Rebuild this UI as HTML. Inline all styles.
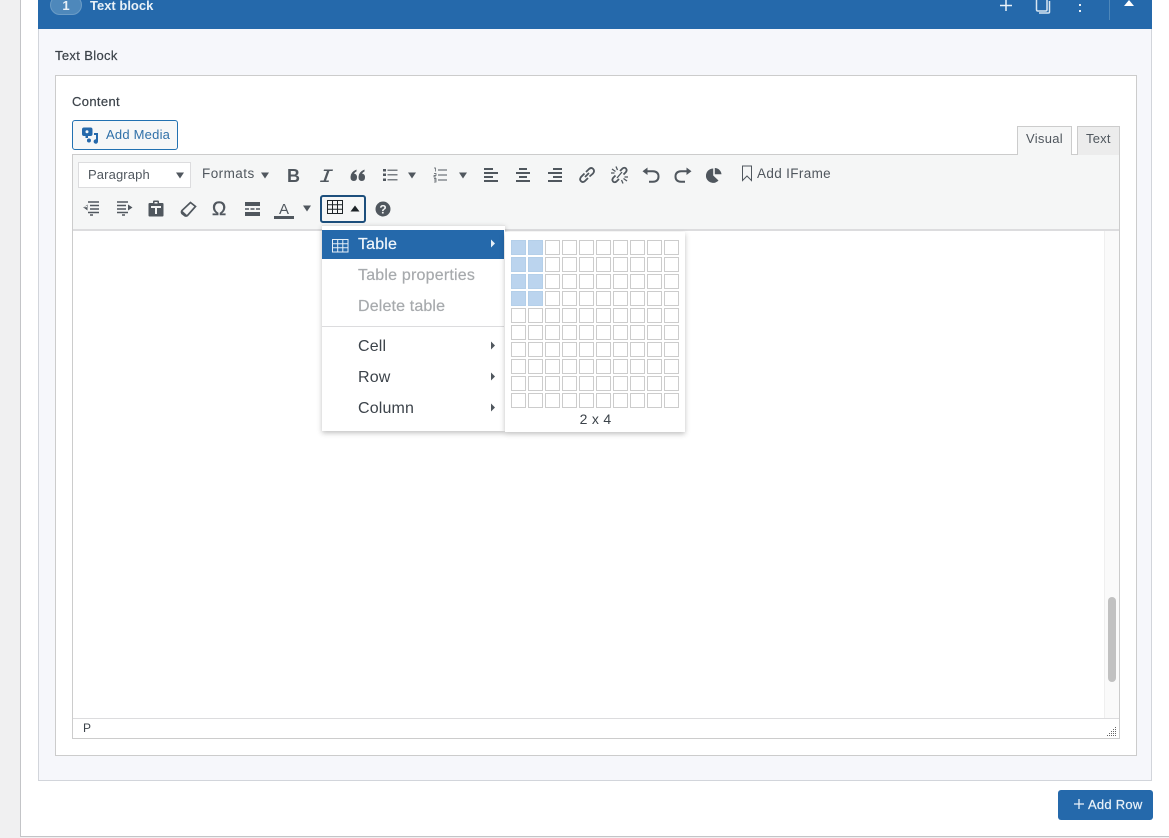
<!DOCTYPE html>
<html><head><meta charset="utf-8"><style>
html,body{margin:0;padding:0}
body{width:1169px;height:838px;overflow:hidden;position:relative;background:#f0f0f1;font-family:"Liberation Sans",sans-serif;color:#3c434a}
div,span,svg{position:absolute;box-sizing:border-box}
.t{white-space:nowrap}
.i{fill:#50575e;stroke:none}
.s{fill:none;stroke:#50575e;stroke-width:2}
</style></head><body>
<div style="left:20px;top:0;width:1149px;height:837px;background:#fff;border-left:1px solid #c3c4c7;border-bottom:1px solid #c3c4c7"></div>
<div style="left:38px;top:0;width:1114px;height:29px;background:#2569ab"></div>
<div style="left:50px;top:-5px;width:32px;height:20px;border-radius:10px;background:#4e88bb;border:1px solid #6b9cc6"></div>
<div class="t" style="left:50px;width:32px;text-align:center;top:-2px;font-size:13px;line-height:16px;font-weight:bold;color:#e8f0f7">1</div>
<div class="t" style="left:90px;top:-2px;font-size:13px;line-height:16px;font-weight:bold;color:#e8f0f7">Text block</div>
<svg style="left:998px;top:0" width="16" height="12"><path d="M8 0V11M2 5.500H14" stroke="#eaf2f9" stroke-width="1.500" fill="none"/></svg>
<svg style="left:1034px;top:0" width="18" height="14"><path d="M2.500 0V9.500Q2.500 11 4 11H11.500Q13 11 13 9.500V0M15.500 1V12Q15.500 13 14 13H5" stroke="#d7e5f1" stroke-width="1.500" fill="none"/></svg>
<div style="left:1079px;top:4px;width:2px;height:2px;background:#eaf2f9"></div>
<div style="left:1079px;top:10px;width:2px;height:2px;background:#eaf2f9"></div>
<div style="left:1109px;top:0;width:1px;height:20px;background:#4d87ba"></div>
<svg style="left:1123px;top:0" width="12" height="7"><path d="M6 0L11 6H1Z" fill="#fff"/></svg>

<div style="left:38px;top:29px;width:1114px;height:752px;background:#f6f7fb;border:1px solid #d2d5db;border-top:0"></div>
<div class="t" style="left:55px;top:48px;font-size:13px;line-height:16px;color:#3c434a;letter-spacing:.35px;-webkit-text-stroke:.2px #3c434a">Text Block</div>
<div style="left:55px;top:75px;width:1082px;height:681px;background:#fff;border:1px solid #ccc"></div>
<div class="t" style="left:72px;top:94px;font-size:13px;line-height:16px;letter-spacing:.35px;-webkit-text-stroke:.2px #3c434a">Content</div>

<div style="left:72px;top:120px;width:106px;height:30px;background:#f6f7f7;border:1px solid #2271b1;border-radius:3px"></div>
<svg style="left:81px;top:127px" width="18" height="17" viewBox="0 0 18 17"><path d="M3 0.500H9.500Q11.500 0.500 11.500 2.500V7Q11.500 9 9.500 9H7V11H4.500V9H3Q1 9 1 7V2.500Q1 0.500 3 0.500ZM6 3.300A1.500 1.500 0 1 0 6 6.300A1.500 1.500 0 1 0 6 3.300Z" fill="#2569ab" fill-rule="evenodd"/><path d="M13 6H17V14.500A2.200 2.200 0 1 1 15 12.300V8H13ZM8 11.500A2 2 0 1 1 7.900 15.500A2 2 0 1 1 8 11.500Z" fill="#2569ab"/></svg>
<div class="t" style="left:106px;top:127px;font-size:13px;line-height:16px;color:#2f70a8;letter-spacing:.22px">Add Media</div>

<div style="left:1017px;top:126px;width:55px;height:30px;background:#f5f6f6;border:1px solid #ccc;border-bottom:0"></div>
<div class="t" style="left:1026px;top:131px;font-size:13px;line-height:16px;color:#50575e;letter-spacing:.3px">Visual</div>
<div style="left:1077px;top:126px;width:43px;height:29px;background:#ececec;border:1px solid #ccc;border-bottom:0"></div>
<div class="t" style="left:1086px;top:131px;font-size:13px;line-height:16px;color:#50575e;letter-spacing:.2px">Text</div>

<div style="left:72px;top:154px;width:945px;height:1px;background:#ccc"></div>
<div style="left:1072px;top:154px;width:5px;height:1px;background:#ccc"></div>
<div style="left:72px;top:155px;width:1048px;height:584px;background:#fff;border:1px solid #ccc;border-top:0"></div>
<div style="left:73px;top:155px;width:1046px;height:74px;background:#f5f6f6"></div>
<div style="left:73px;top:229px;width:1046px;height:2px;background:#dcdcde"></div>

<div style="left:78px;top:162px;width:113px;height:26px;background:#fff;border:1px solid #dcdcde"></div>
<div class="t" style="left:88px;top:167px;font-size:13px;line-height:16px;color:#50575e;letter-spacing:.12px">Paragraph</div>
<svg style="left:175px;top:172px" width="10" height="7"><path d="M1 0.500H9L5 6.500Z" fill="#50575e"/></svg>
<div class="t" style="left:202px;top:166px;font-size:13.500px;line-height:16px;color:#50575e;letter-spacing:.45px">Formats</div>
<svg style="left:260px;top:172px" width="10" height="7"><path d="M1 0.500H9L5 6.500Z" fill="#50575e"/></svg>

<div class="t" style="left:287px;top:166px;font-size:18px;line-height:20px;font-weight:bold;color:#50575e">B</div>
<svg style="left:318px;top:168px" width="16" height="15" viewBox="0 0 16 15"><path d="M6 1.500H15L14.600 3H11.400L8 12.500H11L10.600 14H2L2.400 12.500H5.600L9 3H5.600Z" class="i"/></svg>
<svg style="left:350px;top:169px" width="16" height="13" viewBox="0 0 16 13"><path d="M6.500 0.500V2.500Q4.300 3.500 4.200 4.800Q7 5 7 8.300Q7 12 3.800 12Q0.500 12 0.500 8Q0.500 3 6.500 0.500ZM14.500 0.500V2.500Q12.300 3.500 12.200 4.800Q15 5 15 8.300Q15 12 11.800 12Q8.500 12 8.500 8Q8.500 3 14.500 0.500Z" class="i"/></svg>
<svg style="left:383px;top:168px" width="15" height="14" viewBox="0 0 15 14"><path d="M0 1H3V3.500H0ZM0 5.500H3V8H0ZM0 10.500H3V13H0Z" class="i"/><path d="M4.500 2.200H14.500M4.500 6.800H14.500M4.500 11.800H14.500" style="stroke:#50575e;stroke-width:1.200;fill:none"/></svg>
<svg style="left:407px;top:172px" width="10" height="7"><path d="M1 0.500H9L5 6.500Z" fill="#50575e"/></svg>
<svg style="left:433px;top:167px" width="15" height="16" viewBox="0 0 15 16"><path d="M5 3H14M5 8H14M5 13H14" style="stroke:#50575e;stroke-width:1;fill:none"/><path d="M1 1H2.500V4.500M1 6.500H3V8.500H1V10H3M1 11.500H3V15H1M1 13H3" style="stroke:#50575e;stroke-width:.7;fill:none"/></svg>
<svg style="left:458px;top:172px" width="10" height="7"><path d="M1 0.500H9L5 6.500Z" fill="#50575e"/></svg>
<svg style="left:484px;top:168px" width="15" height="14"><path d="M0 0H9V2H0ZM0 4H14V6H0ZM0 8H9V10H0ZM0 12H14V14H0Z" class="i"/></svg>
<svg style="left:516px;top:168px" width="15" height="14"><path d="M3 0H11V2H3ZM0 4H14V6H0ZM3 8H11V10H3ZM0 12H14V14H0Z" class="i"/></svg>
<svg style="left:548px;top:168px" width="15" height="14"><path d="M5 0H14V2H5ZM0 4H14V6H0ZM5 8H14V10H5ZM0 12H14V14H0Z" class="i"/></svg>
<svg style="left:578px;top:166px" width="18" height="18" viewBox="0 0 18 18"><path d="M7 11L11 7M6.500 7.500L3 11Q1.200 13.500 3 15.200Q5 17 7 15L10 12M8 6L11 3Q13.500 1 15.200 3Q17 5 15 7.500L11.500 10.500" class="s" style="stroke-width:1.800"/></svg>
<svg style="left:610px;top:165px" width="19" height="20" viewBox="0 0 19 20"><path d="M10 6L12.500 3.500Q14.500 2 16 3.500Q17.500 5.500 15.500 7.500L13.500 9.500M9 14L6.500 16.500Q4.500 18 3 16.500Q1.500 14.500 3.500 12.500L5.500 10.500" class="s" style="stroke-width:1.800"/><path d="M6 1.500L7.500 5M2 4L5.500 6.500M1 8H4.500M13 18.500L11.500 15M17 16L13.500 13.500M18 12H14.500M7 13L12 7" style="stroke:#50575e;stroke-width:1.300;fill:none"/></svg>
<svg style="left:642px;top:167px" width="18" height="16" viewBox="0 0 18 16"><path d="M5.500 0.500V8L0.500 4.200Z" class="i"/><path d="M4 4.200H11Q16.500 4.500 16.500 9.500Q16.500 14.500 11 14.800H7" class="s"/></svg>
<svg style="left:674px;top:167px" width="18" height="16" viewBox="0 0 18 16"><path d="M12.500 0.500V8L17.500 4.200Z" class="i"/><path d="M14 4.200H7Q1.500 4.500 1.500 9.500Q1.500 14.500 7 14.800H11" class="s"/></svg>
<svg style="left:706px;top:167px" width="16" height="16" viewBox="0 0 16 16"><path d="M7.200 1.500V8.500L12.500 13.500A7.200 7.200 0 1 1 7.200 1.500ZM8.800 1V7.300H15.500A6.800 6.800 0 0 0 8.800 1Z" class="i"/></svg>
<svg style="left:741px;top:165px" width="12" height="17" viewBox="0 0 12 17"><path d="M1.500 1H10.500V15.500L6 11L1.500 15.500Z" style="fill:none;stroke:#50575e;stroke-width:1"/></svg>
<div class="t" style="left:757px;top:166px;font-size:13.500px;line-height:16px;color:#50575e;letter-spacing:.35px">Add IFrame</div>

<svg style="left:83px;top:201px" width="17" height="16" viewBox="0 0 17 16"><path d="M5 1H16M7 4.500H16M7 8H16M5 11.500H16" style="stroke:#50575e;stroke-width:1.500;fill:none"/><path d="M1 6.200H4V4.500L0 6.800V6.200ZM0.500 6.500L4.500 3.500V9.500Z" class="i"/><path d="M7 14H10" style="stroke:#50575e;stroke-width:1.500;fill:none"/></svg>
<svg style="left:116px;top:201px" width="17" height="16" viewBox="0 0 17 16"><path d="M1 1H12M1 4.500H10M1 8H10M1 11.500H12" style="stroke:#50575e;stroke-width:1.500;fill:none"/><path d="M16.500 6.500L12 3.500V9.500Z" class="i"/><path d="M6 14H9" style="stroke:#50575e;stroke-width:1.500;fill:none"/></svg>
<svg style="left:148px;top:200px" width="16" height="17" viewBox="0 0 16 17"><path d="M1.500 3H5V1.500Q5 0.500 6 0.500H10Q11 0.500 11 1.500V3H14.500Q15.500 3 15.500 4V15.500Q15.500 16.500 14.500 16.500H1.500Q0.500 16.500 0.500 15.500V4Q0.500 3 1.500 3ZM6.500 2V3.500H9.500V2ZM3 6V8H7V14H9V8H13V6Z" class="i" fill-rule="evenodd"/></svg>
<svg style="left:180px;top:201px" width="17" height="17" viewBox="0 0 17 17"><path d="M10.500 1.500L15.500 5.500L7.500 14.500Q6 15.500 4.500 14.500L2 12.500Q1 11 2 9.500Z" style="fill:none;stroke:#50575e;stroke-width:1.700"/><path d="M2 9.500L7.500 14.500Q6 15.500 4.500 14.500L2 12.500Q1 11 2 9.500Z" class="i"/></svg>
<div class="t" style="left:212px;top:200px;font-size:19px;line-height:20px;color:#50575e;-webkit-text-stroke:.4px #50575e">Ω</div>
<svg style="left:245px;top:202px" width="15" height="14"><path d="M0 0H15V4H0ZM0 10H15V14H0ZM0 6.200H4V7.800H0ZM5.500 6.200H9.500V7.800H5.500ZM11 6.200H15V7.800H11Z" class="i"/></svg>
<div class="t" style="left:279px;top:202px;font-size:15px;line-height:16px;color:#50575e">A</div>
<div style="left:274px;top:216px;width:20px;height:2.500px;background:#50575e"></div>
<svg style="left:302px;top:205px" width="10" height="7"><path d="M1 0.500H9L5 6.500Z" fill="#50575e"/></svg>

<div style="left:320px;top:195px;width:46px;height:28px;background:#f5f6f6;border:2px solid #1d4f7c;border-radius:3px"></div>
<svg style="left:327px;top:200px" width="17" height="15" viewBox="0 0 17 15"><path d="M0.500 0.500H15.500V13.500H0.500ZM0.500 4.800H15.500M0.500 9.200H15.500M5.500 0.500V13.500M10.500 0.500V13.500" stroke="#1d2327" stroke-width="1" fill="none"/></svg>
<svg style="left:350px;top:205px" width="10" height="7"><path d="M5 0.500L9.500 6.500H0.500Z" fill="#1d2327"/></svg>
<svg style="left:375px;top:201px" width="16" height="16" viewBox="0 0 16 16"><circle cx="8" cy="8" r="7.500" fill="#50575e"/><text x="8" y="12.300" font-size="12" font-weight="bold" text-anchor="middle" fill="#f5f6f6" font-family="Liberation Sans">?</text></svg>

<div style="left:1104px;top:231px;width:15px;height:487px;background:#fafafa;border-left:1px solid #efefef"></div>
<div style="left:1108px;top:597px;width:8px;height:85px;border-radius:4px;background:#c1c1c1"></div>
<div style="left:73px;top:718px;width:1046px;height:1px;background:#dcdcde"></div>
<div class="t" style="left:83px;top:721px;font-size:12px;line-height:15px;color:#3c434a">P</div>
<svg style="left:1106px;top:726px" width="11" height="11"><path d="M9 1h1v1H9zM7 3h1v1H7zM9 3h1v1H9zM5 5h1v1H5zM7 5h1v1H7zM9 5h1v1H9zM3 7h1v1H3zM5 7h1v1H5zM7 7h1v1H7zM9 7h1v1H9zM1 9h1v1H1zM3 9h1v1H3zM5 9h1v1H5zM7 9h1v1H7zM9 9h1v1H9z" fill="#666"/></svg>

<div style="left:322px;top:225px;width:183px;height:206px;background:#fff;box-shadow:0 2px 5px rgba(0,0,0,.25);border-top:1px solid #e4e4e4"></div>
<div style="left:322px;top:230px;width:182px;height:29px;background:#2569ab"></div>
<svg style="left:332px;top:239px" width="17" height="14" viewBox="0 0 17 14"><path d="M0.500 0.500H16V13H0.500ZM0.500 4.700H16M0.500 8.800H16M5.700 0.500V13M10.800 0.500V13" stroke="#e6f0f8" stroke-width="1" fill="none"/></svg>
<div class="t" style="left:358px;top:236px;font-size:16px;line-height:18px;color:#f0f6fb;letter-spacing:.15px;-webkit-text-stroke:.2px #f0f6fb">Table</div>
<svg style="left:490px;top:239px" width="6" height="9"><path d="M1 0.500L5 4.500L1 8.500Z" fill="#e6f0f8"/></svg>
<div class="t" style="left:358px;top:267px;font-size:16px;line-height:18px;color:#a7aaad;letter-spacing:.2px;-webkit-text-stroke:.2px #a7aaad">Table properties</div>
<div class="t" style="left:358px;top:298px;font-size:16px;line-height:18px;color:#a7aaad;letter-spacing:.15px;-webkit-text-stroke:.2px #a7aaad">Delete table</div>
<div style="left:322px;top:326px;width:182px;height:1px;background:#dcdcde"></div>
<div class="t" style="left:358px;top:338px;font-size:16px;line-height:18px;color:#3c434a;letter-spacing:.15px">Cell</div>
<svg style="left:490px;top:341px" width="6" height="9"><path d="M1 0.500L5 4.500L1 8.500Z" fill="#50575e"/></svg>
<div class="t" style="left:358px;top:369px;font-size:16px;line-height:18px;color:#3c434a;letter-spacing:.15px">Row</div>
<svg style="left:490px;top:372px" width="6" height="9"><path d="M1 0.500L5 4.500L1 8.500Z" fill="#50575e"/></svg>
<div class="t" style="left:358px;top:400px;font-size:16px;line-height:18px;color:#3c434a;letter-spacing:.15px">Column</div>
<svg style="left:490px;top:403px" width="6" height="9"><path d="M1 0.500L5 4.500L1 8.500Z" fill="#50575e"/></svg>

<div style="left:505px;top:232px;width:180px;height:200px;background:#fff;box-shadow:0 2px 5px rgba(0,0,0,.25)"></div>
<svg style="left:505px;top:232px" width="180" height="180" viewBox="0 0 180 180">
<defs><pattern id="g" x="6" y="8" width="17" height="17" patternUnits="userSpaceOnUse"><rect x=".5" y=".5" width="14" height="14" fill="#fff" stroke="#ccc"/></pattern>
<pattern id="h" x="6" y="8" width="17" height="17" patternUnits="userSpaceOnUse"><rect x=".5" y=".5" width="14" height="14" fill="#bbd4ee" stroke="#b4cfe9"/></pattern></defs>
<rect x="6" y="8" width="170" height="170" fill="url(#g)"/>
<rect x="6" y="8" width="34" height="68" fill="url(#h)"/>
</svg>
<div class="t" style="left:505px;width:181px;text-align:center;top:411px;font-size:14px;line-height:16px;color:#3c434a;letter-spacing:.3px">2 x 4</div>

<div style="left:1058px;top:790px;width:95px;height:30px;background:#2569ab;border-radius:3px"></div>
<svg style="left:1073px;top:798px" width="12" height="12"><path d="M6 1V11M1 6H11" stroke="#eaf2f9" stroke-width="1.300" fill="none"/></svg>
<div class="t" style="left:1088px;top:797px;font-size:13px;line-height:16px;color:#eaf2f9;letter-spacing:.25px;-webkit-text-stroke:.2px #eaf2f9">Add Row</div>
</body></html>
